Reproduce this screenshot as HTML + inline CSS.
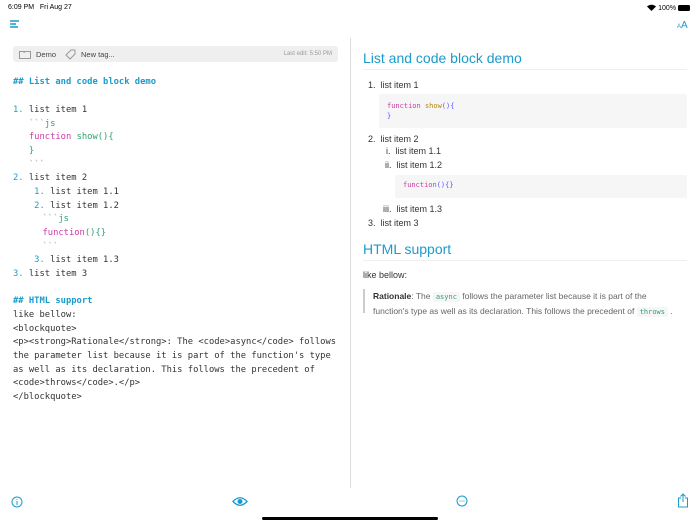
<!DOCTYPE html>
<html><head><meta charset="utf-8"><style>
*{margin:0;padding:0;box-sizing:border-box}
body{width:700px;height:525px;overflow:hidden;background:#fff;font-family:"Liberation Sans",sans-serif;position:relative;color:#333}
.abs{position:absolute}
.mono{font-family:"DejaVu Sans Mono","Liberation Mono",monospace;font-size:8.8px;white-space:pre;color:#333}
.ed div{position:absolute;left:13px;height:14px;line-height:14px}
.b{color:#1b9bcc}.bb{color:#1b9bcc;font-weight:bold}.g{color:#2f9e6e}.m{color:#cc3aa6}.gr{color:#9aa}
.r{font-size:9px;color:#333}
.code{background:#f6f6f6;font-family:"DejaVu Sans Mono",monospace;font-size:7px;white-space:pre;border-radius:2px}
</style></head><body>
<div class="abs" style="left:8px;top:4px;font-size:7px;color:#000">6:09 PM&nbsp;&nbsp; Fri Aug 27</div>
<div class="abs" style="right:10px;top:4px;font-size:7px;color:#000">
<svg width="9" height="7" viewBox="0 0 9 7" style="vertical-align:-1px"><path d="M4.5 7L0 2.5A6.5 6.5 0 0 1 9 2.5Z" fill="#000"/></svg> 100% <span style="display:inline-block;width:12px;height:6px;background:#000;border-radius:1.5px;vertical-align:-1px"></span></div>
<svg class="abs" style="left:10px;top:20px" width="10" height="9"><path d="M0 1h9M0 4h6M0 7h8" stroke="#1b9bcc" stroke-width="1.4"/></svg>
<div class="abs" style="left:677px;top:20px;color:#1b9bcc;font-size:10px"><span style="font-size:6px">A</span>A</div>
<div class="abs" style="left:13px;top:46px;width:325px;height:16px;background:#efefef;border-radius:3px;font-size:7.5px;color:#444">
<svg class="abs" style="left:6px;top:4px" width="12" height="9"><rect x="0.5" y="1.5" width="11" height="7" fill="none" stroke="#999"/><path d="M0.5 1.5h4l1 1.5" stroke="#999" fill="none"/></svg>
<span class="abs" style="left:23px;top:4px">Demo</span>
<svg class="abs" style="left:52px;top:3px" width="11" height="11"><path d="M1 6L6 1h4v4L5 10Z" fill="none" stroke="#999"/></svg>
<span class="abs" style="left:68px;top:4px">New tag...</span>
<span class="abs" style="right:6px;top:5px;font-size:6px;color:#999">Last edit: 5:50 PM</span></div>
<div class="ed mono">
<div style="top:75px" class="bb">## List and code block demo</div>
<div style="top:103px"><span class="b">1.</span> list item 1</div>
<div style="top:117px"><span class="gr">   &#96;&#96;&#96;</span><span class="g">js</span></div>
<div style="top:130px"><span class="m">   function</span> <span class="g">show(){</span></div>
<div style="top:144px" class="g">   }</div>
<div style="top:158px" class="gr">   &#96;&#96;&#96;</div>
<div style="top:171px"><span class="b">2.</span> list item 2</div>
<div style="top:185px"><span class="b">    1.</span> list item 1.1</div>
<div style="top:199px"><span class="b">    2.</span> list item 1.2</div>
<div style="top:212px;left:16px"><span class="gr">     &#96;&#96;&#96;</span><span class="g">js</span></div>
<div style="top:226px;left:16px" class="m">     function<span class="g">(){}</span></div>
<div style="top:240px;left:16px" class="gr">     &#96;&#96;&#96;</div>
<div style="top:253px"><span class="b">    3.</span> list item 1.3</div>
<div style="top:267px"><span class="b">3.</span> list item 3</div>
<div style="top:294px" class="bb">## HTML support</div>
<div style="top:308px">like bellow:</div>
<div style="top:322px">&lt;blockquote&gt;</div>
<div style="top:335px">&lt;p&gt;&lt;strong&gt;Rationale&lt;/strong&gt;: The &lt;code&gt;async&lt;/code&gt; follows</div>
<div style="top:349px">the parameter list because it is part of the function's type</div>
<div style="top:363px">as well as its declaration. This follows the precedent of</div>
<div style="top:376px">&lt;code&gt;throws&lt;/code&gt;.&lt;/p&gt;</div>
<div style="top:390px">&lt;/blockquote&gt;</div>
</div>
<div class="abs" style="left:350px;top:38px;width:1px;height:450px;background:#ddd"></div>
<div class="abs" style="left:363px;top:50px;font-size:14px;color:#1b9bcc">List and code block demo</div>
<div class="abs" style="left:363px;top:69px;width:324px;height:1px;background:#eee"></div>
<div class="abs r" style="left:368px;top:80px">1.&nbsp; list item 1</div>
<div class="abs code" style="left:379px;top:94px;width:308px;height:34px;padding:7px 8px;line-height:10px"><span class="m">function</span> <span style="color:#b8860b">show</span><span style="color:#55f">(){</span>
<span style="color:#55f">}</span></div>
<div class="abs r" style="left:368px;top:134px">2.&nbsp; list item 2</div>
<div class="abs r" style="left:386px;top:146px">i.&nbsp; list item 1.1</div>
<div class="abs r" style="left:385px;top:160px">ii.&nbsp; list item 1.2</div>
<div class="abs code" style="left:395px;top:175px;width:292px;height:23px;padding:6px 8px"><span class="m">function</span><span style="color:#55f">(){}</span></div>
<div class="abs r" style="left:383px;top:204px">iii.&nbsp; list item 1.3</div>
<div class="abs r" style="left:368px;top:218px">3.&nbsp; list item 3</div>
<div class="abs" style="left:363px;top:241px;font-size:14px;color:#1b9bcc">HTML support</div>
<div class="abs" style="left:363px;top:260px;width:324px;height:1px;background:#eee"></div>
<div class="abs r" style="left:363px;top:270px">like bellow:</div>
<div class="abs" style="left:363px;top:289px;width:2px;height:24px;background:#ccc"></div>
<div class="abs" style="left:373px;top:290px;font-size:8.5px;color:#666;line-height:13.5px;width:320px"><b style="color:#333">Rationale</b>: The <span class="code" style="color:#2f9e6e;padding:1px 3px">async</span> follows the parameter list because it is part of the<br>function's type as well as its declaration. This follows the precedent of <span class="code" style="color:#2f9e6e;padding:1px 3px">throws</span> .</div>
<svg class="abs" style="left:11px;top:496px" width="12" height="12"><circle cx="6" cy="6" r="5" fill="none" stroke="#1b9bcc"/><path d="M6 5v4M6 3v.8" stroke="#1b9bcc"/></svg>
<svg class="abs" style="left:232px;top:496px" width="16" height="11"><path d="M1 5.5Q8 -2 15 5.5Q8 13 1 5.5Z" fill="none" stroke="#1b9bcc" stroke-width="1.3"/><circle cx="8" cy="5.5" r="2.5" fill="#1b9bcc"/></svg>
<svg class="abs" style="left:456px;top:495px" width="12" height="12"><circle cx="6" cy="6" r="5" fill="none" stroke="#1b9bcc"/><path d="M3.5 6h1M5.5 6h1M7.5 6h1" stroke="#1b9bcc"/></svg>
<svg class="abs" style="left:677px;top:493px" width="12" height="15"><path d="M4 5H1.5v9h9V5H8M6 1v8M3.5 3.5L6 1l2.5 2.5" fill="none" stroke="#1b9bcc"/></svg>
<div class="abs" style="left:262px;top:517px;width:176px;height:3px;background:#000;border-radius:2px"></div>
</body></html>
